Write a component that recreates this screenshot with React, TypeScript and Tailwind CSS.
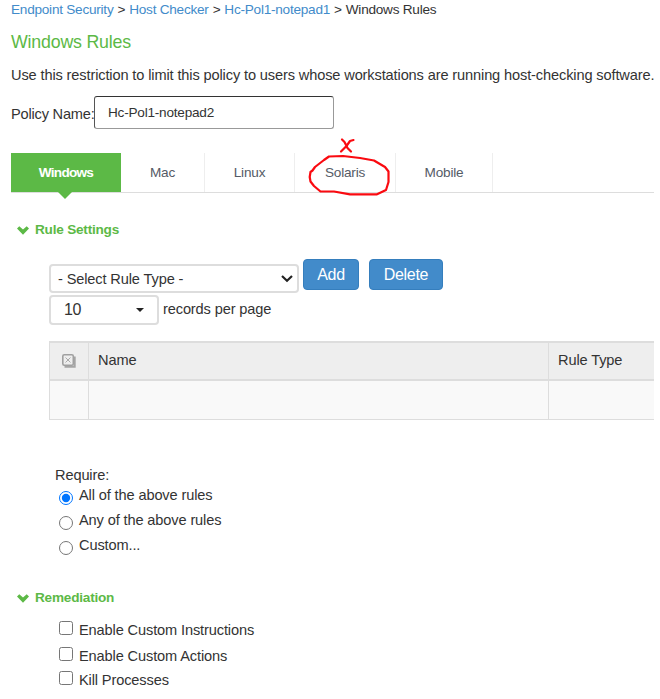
import { useState } from "react";

const tabs = [
  { name: "Windows", width: "w-[110px]" },
  { name: "Mac", width: "w-[84px]" },
  { name: "Linux", width: "w-[90px]" },
  { name: "Solaris", width: "w-[101px]" },
  { name: "Mobile", width: "w-[97px]" },
];

const requirements = [
  { label: "All of the above rules", height: "h-[25px]" },
  { label: "Any of the above rules", height: "h-[25px]" },
  { label: "Custom...", height: "h-[26px]" },
];

const remediations = [
  { label: "Enable Custom Instructions", height: "h-[26px]" },
  { label: "Enable Custom Actions", height: "h-[24px]" },
  { label: "Kill Processes", height: "h-[25px]" },
];

function SectionTitle({ children }: { children: string }) {
  return (
    <h2 className="flex h-5 items-center gap-[6px] pl-[17px] text-[13.6px] font-bold tracking-[-0.22px] text-[#5cb946]">
      <svg viewBox="0 0 12 9" className="h-[9px] w-3" fill="currentColor">
        <path d="M0 2.400 2.300 .2 6 3.600 9.700 .2 12 2.400 6 8.800Z" />
      </svg>
      {children}
    </h2>
  );
}

// Red pen marks drawn over the Solaris tab
function Annotation() {
  return (
    <svg
      viewBox="0 0 100 72"
      className="pointer-events-none absolute -top-[23px] left-[5px] h-[72px] w-[100px]"
      fill="none"
      stroke="#fa0a10"
      strokeWidth="2.2"
      strokeLinecap="round"
      strokeLinejoin="round"
    >
      <path d="M42 9.500 44.500 12 47.500 18 51 21.500M53.500 10 50 11 46.500 16 41 21.500" />
      <path d="M12.500 40.500 10.500 42 9.700 47 10.500 51.500 14 56 20.500 61.500 34 61.500 50 64.300H77L86 60 88.500 52 88.500 41.500 85 37 74 30.500 60 28 43 26 29 26.500 24 30 15 37Z" />
    </svg>
  );
}

export default function App() {
  const [tab, setTab] = useState("Windows");
  const [required, setRequired] = useState(requirements[0].label);
  const [checked, setChecked] = useState<string[]>([]);

  const toggle = (label: string) =>
    setChecked((prev) =>
      prev.includes(label) ? prev.filter((l) => l !== label) : [...prev, label]
    );

  return (
    <div className="h-[699px] w-[654px] overflow-hidden bg-white font-['Liberation_Sans',Arial,sans-serif] text-[14.6px] leading-5 tracking-[-0.13px] text-[#333]">
      <nav className="flex h-[19px] gap-1 pl-[11px] text-[13.6px] leading-[19px] tracking-[-0.24px] whitespace-nowrap text-[#428bca]">
        <a href="#">Endpoint Security</a>
        <span className="text-[#333]">&gt;</span>
        <a href="#">Host Checker</a>
        <span className="text-[#333]">&gt;</span>
        <a href="#">Hc-Pol1-notepad1</a>
        <span className="text-[#333]">&gt;</span>
        <span className="text-[#333]">Windows Rules</span>
      </nav>

      <h1 className="mt-[11px] pl-[11px] text-[17.8px] leading-6 tracking-[-0.2px] text-[#5cb946]">Windows Rules</h1>
      <p className="mt-[11px] pl-[11px] whitespace-nowrap">
        Use this restriction to limit this policy to users whose workstations are running host-checking software.
      </p>

      <div className="mt-[11px] flex h-[33px] items-center pl-[11px]">
        <label htmlFor="policy" className="w-[83px] pt-[3px] tracking-[-0.2px] whitespace-nowrap">Policy Name:</label>
        <input
          id="policy"
          defaultValue="Hc-Pol1-notepad2"
          className="h-[33px] w-[240px] rounded-[3px] border border-[#999] border-t-[#333] border-l-[#555] px-[13px] text-[13.6px] tracking-[-0.22px] outline-none"
        />
      </div>

      <div className="ml-[11px] mt-6 flex h-10 border-b border-[#ddd] text-[13.6px] tracking-[-0.2px]">
        {tabs.map(({ name, width }) => (
          <div key={name} className={`relative h-[39px] ${width}`}>
            <button
              onClick={() => setTab(name)}
              className={
                tab === name
                  ? "h-full w-full bg-[#5cb946] font-bold tracking-[-0.75px] text-white"
                  : "h-full w-full border-r border-[#eee] text-[#555b66]"
              }
            >
              {name}
            </button>
            {tab === name && (
              <span className="absolute top-full left-[47px] border-x-[7px] border-t-[7px] border-x-transparent border-t-[#5cb946]" />
            )}
            {name === "Solaris" && <Annotation />}
          </div>
        ))}
      </div>

      <div className="mt-[27px]">
        <SectionTitle>Rule Settings</SectionTitle>
      </div>

      <div className="mt-[19px] flex pl-[49px]">
        <button className="mt-[5px] flex h-[29px] w-[250px] items-center justify-between rounded border-2 border-[#ddd] pr-1 pl-[7px]">
          <span>- Select Rule Type -</span>
          <svg viewBox="0 0 12 8" className="h-2 w-3" fill="none" stroke="#222" strokeWidth="2.2">
            <path d="m1 1 5 4.700 5-4.700" />
          </svg>
        </button>
        <button className="ml-1 h-[31px] w-14 rounded border border-[#357ebd] bg-[#428bca] text-base tracking-[-0.3px] text-white">
          Add
        </button>
        <button className="ml-[10px] h-[31px] w-[74px] rounded border border-[#357ebd] bg-[#428bca] text-base tracking-[-0.3px] text-white">
          Delete
        </button>
      </div>

      <div className="mt-[2px] flex pl-[49px]">
        <button className="flex h-[30px] w-[110px] items-center justify-between rounded border-2 border-[#ddd] pr-[13px] pl-[13px] text-base tracking-[-0.5px]">
          10
          <span className="border-x-[4.5px] border-t-4 border-x-transparent border-t-[#222]" />
        </button>
        <span className="mt-1 ml-1">records per page</span>
      </div>

      <div className="mt-4 ml-[49px] grid grid-cols-[39px_460px_106px] grid-rows-[38px_39px] border-t-2 border-l border-[#ddd] text-[#333]">
        <div className="flex items-center justify-center border-r border-b-2 border-[#ddd] bg-[#eee]">
          <svg viewBox="0 0 14 14" className="h-[14px] w-[14px]" fill="none">
            <path d="M2.500 12.700H12.700V2.500" stroke="#a5a5a5" strokeWidth="2" />
            <rect x=".8" y=".8" width="10.500" height="10.500" rx="1.500" fill="#eee" stroke="#a0a0a0" strokeWidth="1.600" />
            <path d="m3.500 3.500 5 5m0-5-5 5" stroke="#aaa" />
          </svg>
        </div>
        <div className="border-r border-b-2 border-[#ddd] bg-[#eee] pt-[7px] pl-[9px]">Name</div>
        <div className="border-b-2 border-[#ddd] bg-[#eee] pt-[7px] pl-[9px]">Rule Type</div>
        <div className="border-r border-b border-[#ddd] bg-[#f9f9f9]" />
        <div className="border-r border-b border-[#ddd] bg-[#f9f9f9]" />
        <div className="border-b border-[#ddd] bg-[#f9f9f9]" />
      </div>

      <p className="mt-[45px] pl-[55px]">Require:</p>
      <div>
        {requirements.map(({ label, height }) => (
          <label key={label} className={`flex pl-[59px] ${height}`}>
            <input
              type="radio"
              name="require"
              className="mt-[6px] h-[14px] w-[14px]"
              checked={required === label}
              onChange={() => setRequired(label)}
            />
            <span className="ml-[6px]">{label}</span>
          </label>
        ))}
      </div>

      <div className="mt-[27px]">
        <SectionTitle>Remediation</SectionTitle>
      </div>
      <div className="mt-[13px]">
        {remediations.map(({ label, height }) => (
          <label key={label} className={`flex pl-[59px] ${height}`}>
            <input
              type="checkbox"
              className="h-[14px] w-[14px]"
              checked={checked.includes(label)}
              onChange={() => toggle(label)}
            />
            <span className="-mt-px ml-[6px]">{label}</span>
          </label>
        ))}
      </div>
    </div>
  );
}
